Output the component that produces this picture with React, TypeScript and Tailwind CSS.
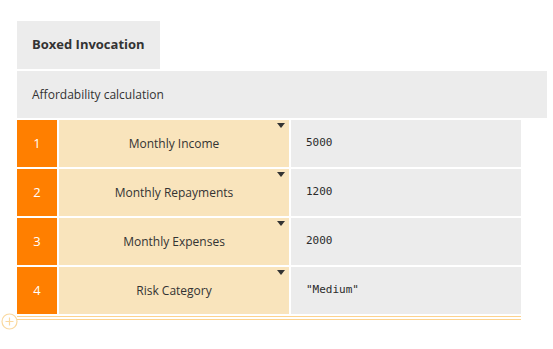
const rows = [
  { index: 1, name: "Monthly Income", value: "5000" },
  { index: 2, name: "Monthly Repayments", value: "1200" },
  { index: 3, name: "Monthly Expenses", value: "2000" },
  { index: 4, name: "Risk Category", value: '"Medium"' },
];

const Caret = () => (
  <svg
    width="8"
    height="5"
    viewBox="0 0 8 5"
    className="absolute right-[4px] top-[3px]"
  >
    <path d="M0 0 H8 L4 5 Z" fill="#333333" />
  </svg>
);

export default function App() {
  return (
    <div className="w-[553px] h-[349px] bg-white font-['Open_Sans',sans-serif] text-[#333333]">
      <div className="pt-[21px] pl-[17px] pr-[6px] relative">
        <div className="w-[143px] h-[48px] bg-[#ececec] flex items-center px-[15px] text-[13px] font-bold whitespace-nowrap">
          Boxed Invocation
        </div>
        <div className="mt-[2px] h-[47px] bg-[#ececec] flex items-center px-[15px] text-[12px]">
          Affordability calculation
        </div>
        <div className="w-[504px] flex flex-col gap-[2px] mt-[2px]">
          {rows.map((row) => (
            <div key={row.index} className="flex h-[47px] gap-[2px]">
              <div className="w-[40px] bg-[#ff7f00] text-white text-[13px] flex items-center justify-center">
                {row.index}
              </div>
              <div className="relative w-[230px] bg-[#f9e4bc] text-[12px] flex items-center justify-center">
                {row.name}
                <Caret />
              </div>
              <div className="flex-1 bg-[#ececec] flex items-center pl-[15px] text-[11px] font-['DejaVu_Sans_Mono',monospace] text-[#2b2b2b]">
                {row.value}
              </div>
            </div>
          ))}
        </div>
        <div className="w-[504px] mt-[2px] h-[4px] border-t border-b border-[#fdd38e]" />
        <svg
          width="18"
          height="18"
          viewBox="0 0 18 18"
          className="absolute left-[1px] top-[313px]"
        >
          <circle cx="8.5" cy="8.5" r="7.5" fill="white" stroke="#fad9a0" strokeWidth="1.2" />
          <path d="M4.5 8.5 H12.5 M8.5 4.5 V12.5" stroke="#fad9a0" strokeWidth="1.2" />
        </svg>
      </div>
    </div>
  );
}
